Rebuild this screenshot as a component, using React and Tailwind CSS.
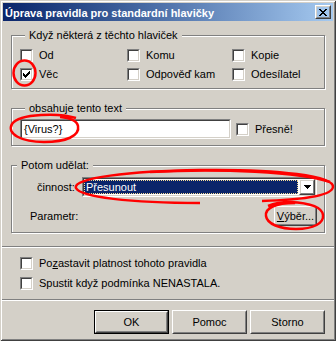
import React from "react";

const font = { fontFamily: '"Liberation Sans", Arial, sans-serif' };

function Check({ checked }) {
  return (
    <div className="w-[13px] h-[13px] shrink-0 border border-t-[#808080] border-l-[#808080] border-r-white border-b-white">
      <div className="relative w-full h-full border border-t-[#404040] border-l-[#404040] border-r-[#d4d0c8] border-b-[#d4d0c8] bg-white">
        {checked && (
          <svg width="7" height="7" viewBox="0 0 7 7" shapeRendering="crispEdges" className="absolute left-[1px] top-[1px]">
            <rect x="6" y="0" width="1" height="1" fill="#000" />
            <rect x="5" y="1" width="2" height="1" fill="#000" />
            <rect x="0" y="2" width="1" height="1" fill="#000" />
            <rect x="4" y="2" width="3" height="1" fill="#000" />
            <rect x="0" y="3" width="2" height="1" fill="#000" />
            <rect x="3" y="3" width="3" height="1" fill="#000" />
            <rect x="0" y="4" width="5" height="1" fill="#000" />
            <rect x="1" y="5" width="3" height="1" fill="#000" />
            <rect x="2" y="6" width="1" height="1" fill="#000" />
          </svg>
        )}
      </div>
    </div>
  );
}

function CheckRow({ checked, children }) {
  return (
    <div className="flex items-center gap-[6px] h-[13px] leading-[13px]">
      <Check checked={checked} />
      <span className="whitespace-nowrap">{children}</span>
    </div>
  );
}

function Raised({ children, className = "" }) {
  return (
    <div className={"border border-t-white border-l-white border-r-[#404040] border-b-[#404040] " + className}>
      <div className="w-full h-full border border-t-[#d4d0c8] border-l-[#d4d0c8] border-r-[#808080] border-b-[#808080] flex items-center justify-center">
        {children}
      </div>
    </div>
  );
}

function Button({ children, def }) {
  if (def) {
    return (
      <div className="w-[75px] h-[24px] border border-black">
        <div className="w-full h-full border border-t-white border-l-white border-r-[#404040] border-b-[#404040]">
          <div className="w-full h-full border border-t-[#d4d0c8] border-l-[#d4d0c8] border-r-[#808080] border-b-[#808080] flex items-center justify-center">
            {children}
          </div>
        </div>
      </div>
    );
  }
  return <Raised className="w-[75px] h-[24px]">{children}</Raised>;
}

function Group({ label, children, className = "" }) {
  return (
    <fieldset className={"mx-[8px] min-w-0 border border-[#808080] shadow-[inset_1px_1px_0_#fff,1px_1px_0_#fff] " + className}>
      <legend className="ml-[5px] px-[4px] leading-[13px] bg-[#d4d0c8]">{label}</legend>
      {children}
    </fieldset>
  );
}

function Sep({ className = "" }) {
  return <div className={"-mx-[1px] h-[2px] border-t border-t-[#808080] border-b border-b-white " + className} />;
}

export default function App() {
  return (
    <div
      className="relative w-[336px] h-[341px] bg-[#d4d0c8] p-[3px] text-[11px] text-black shadow-[inset_1px_1px_0_#d4d0c8,inset_-1px_-1px_0_#404040,inset_2px_2px_0_#fff,inset_-2px_-2px_0_#808080] overflow-hidden"
      style={font}
    >
      {/* title bar */}
      <div className="h-[18px] flex items-center justify-between pl-[2px] pr-[2px] bg-gradient-to-r from-[#0a246a] to-[#a6caf0]">
        <span className="text-white font-bold text-[11px] leading-[18px] pt-[1px] whitespace-nowrap">Úprava pravidla pro standardní hlavičky</span>
        <Raised className="w-[16px] h-[14px]">
          <svg width="8" height="7" viewBox="0 0 8 7" shapeRendering="crispEdges">
            <path d="M0 0h2v1h1v1h2v-1h1v-1h2v1h-1v1h-1v1h-1v1h1v1h1v1h1v1h-2v-1h-1v-1h-2v1h-1v1h-2v-1h1v-1h1v-1h1v-1h-1v-1h-1v-1h-1z" fill="#000" />
          </svg>
        </Raised>
      </div>

      {/* group 1 */}
      <Group label="Když některá z těchto hlaviček" className="mt-[8px] pt-[7px] pb-[7px] pl-[8px]">
        <div className="grid grid-cols-[107px_105px_auto] gap-y-[6px]">
          <CheckRow>Od</CheckRow>
          <CheckRow>Komu</CheckRow>
          <CheckRow>Kopie</CheckRow>
          <CheckRow checked>Věc</CheckRow>
          <CheckRow>Odpověď kam</CheckRow>
          <CheckRow>Odesílatel</CheckRow>
        </div>
      </Group>

      {/* group 2 */}
      <Group label="obsahuje tento text" className="mt-[13px] pt-[4px] pb-[6px] pl-[8px]">
        <div className="flex items-center">
          <div className="w-[211px] h-[20px] border border-t-[#808080] border-l-[#808080] border-r-white border-b-white">
            <div className="w-full h-full border border-t-[#404040] border-l-[#404040] border-r-[#d4d0c8] border-b-[#d4d0c8] bg-white flex items-center pl-[2px] leading-[13px]">
              {"{Virus?}"}
            </div>
          </div>
          <div className="ml-[5px]">
            <CheckRow>Přesně!</CheckRow>
          </div>
        </div>
      </Group>

      {/* group 3 */}
      <Group label="Potom udělat:" className="mt-[13px] pt-[5px] pb-[6px] pr-[7px]">
        <div className="flex items-center">
          <span className="ml-[25px] w-[45px] leading-[13px]">činnost:</span>
          <div className="w-[235px] h-[20px] border border-t-[#808080] border-l-[#808080] border-r-white border-b-white">
            <div className="w-full h-full border border-t-[#404040] border-l-[#404040] border-r-[#d4d0c8] border-b-[#d4d0c8] bg-white flex">
              <div className="flex-1 my-[1px] ml-[0px] mr-[1px] bg-[#0a246a] border border-dotted border-[#f5db95] text-white flex items-center pl-[1px] leading-[13px]">
                Přesunout
              </div>
              <Raised className="w-[16px] h-full">
                <svg width="7" height="4" viewBox="0 0 7 4" shapeRendering="crispEdges">
                  <path d="M0 0h7v1h-1v1h-1v1h-1v1h-1v-1h-1v-1h-1v-1h-1z" fill="#000" />
                </svg>
              </Raised>
            </div>
          </div>
        </div>
        <div className="flex items-center justify-between mt-[9px]">
          <span className="ml-[18px] leading-[13px]">Parametr:</span>
          <Raised className="w-[43px] h-[20px]">
            <span className="leading-[13px]"><u className="underline-offset-[1px]">V</u>ýběr...</span>
          </Raised>
        </div>
      </Group>

      <Sep className="mt-[13px]" />

      <div className="pl-[17px] mt-[9px] flex flex-col gap-[7px]">
        <CheckRow>Po<u className="underline-offset-[1px]">z</u>astavit platnost tohoto pravidla</CheckRow>
        <CheckRow>Spustit když podmínka NENASTALA.</CheckRow>
      </div>

      <Sep className="mt-[9px]" />

      <div className="mt-[9px] mr-[8px] flex justify-end gap-[3px]">
        <Button def>OK</Button>
        <Button>Pomoc</Button>
        <Button>Storno</Button>
      </div>

      {/* red annotation ellipses */}
      <svg className="absolute left-0 top-0 pointer-events-none" width="336" height="341" viewBox="0 0 336 341">
        <g fill="none" stroke="#ff0000" strokeWidth="2.5">
          <ellipse cx="24.5" cy="73" rx="11" ry="12.5" />
          <path d="M76 118 C 60 113, 20 113, 12 124 C 6 134, 22 142, 44 142 C 66 142, 80 136, 78 126 C 77 121, 70 118, 60 117" />
          <path d="M200 203 C 130 203, 80 197, 76 188 C 72 178, 130 171, 200 170 C 280 169, 334 176, 333 187 C 332 196, 300 200, 262 201" />
          <path d="M150 172 C 220 168, 300 172, 330 182" />
          <path d="M295 203 C 275 203, 265 208, 266 216 C 267 224, 280 229, 296 229 C 314 229, 324 223, 323 215 C 322 207, 310 203, 290 202 C 282 202, 275 203, 268 206" />
        </g>
      </svg>
    </div>
  );
}
